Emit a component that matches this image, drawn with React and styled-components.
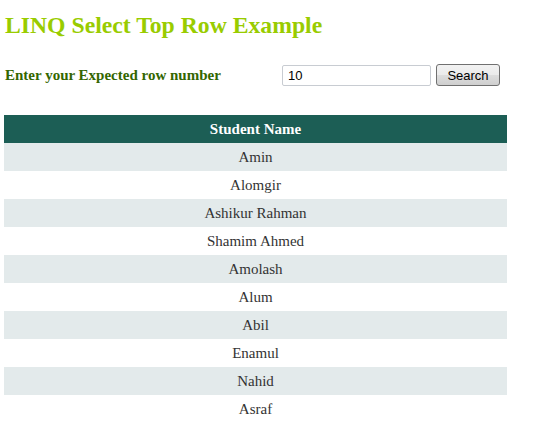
import React from 'react';
import styled, { createGlobalStyle } from 'styled-components';

const GlobalStyle = createGlobalStyle`
  body {
    margin: 0;
    background: #fff;
    font-family: "Liberation Serif", "Times New Roman", serif;
  }
`;

const Page = styled.div`
  padding: 9px 0 0 4px;
`;

const Title = styled.h2`
  margin: 0 0 0 1px;
  font-size: 23.7px;
  line-height: 32px;
  font-weight: bold;
  color: #99cc00;
`;

const SearchRow = styled.div`
  display: flex;
  align-items: center;
  margin-top: 23px;
  height: 22px;
`;

const Label = styled.label`
  width: 277px;
  padding-left: 1px;
  font-size: 15px;
  font-weight: bold;
  color: #336600;
`;

const Input = styled.input`
  box-sizing: border-box;
  width: 149px;
  height: 21px;
  margin: 0;
  padding: 1px 5px;
  border: 1px solid #c8ccd2;
  border-radius: 2px;
  font-family: "Liberation Sans", Arial, sans-serif;
  font-size: 13px;
  color: #000;
`;

const Button = styled.button`
  box-sizing: border-box;
  width: 64px;
  height: 22px;
  margin-left: 5px;
  padding: 0;
  border: 1px solid #707070;
  border-radius: 3px;
  background: linear-gradient(#f2f2f2, #ebebeb 50%, #dddddd 51%, #cfcfcf);
  font-family: "Liberation Sans", Arial, sans-serif;
  font-size: 13px;
  color: #000;
`;

const Table = styled.table`
  margin-top: 29px;
  width: 503px;
  border-collapse: collapse;
  font-family: "Liberation Serif", "Times New Roman", serif;
  font-size: 15px;
  color: #333;
`;

const HeadCell = styled.th`
  height: 28px;
  padding: 0;
  background: #1c5e55;
  color: #fff;
  font-weight: bold;
  text-align: center;
`;

const Row = styled.tr`
  background: ${(p) => (p.$alt ? '#e3eaeb' : '#fff')};
`;

const Cell = styled.td`
  height: 28px;
  padding: 0;
  text-align: center;
`;

const students = [
  'Amin',
  'Alomgir',
  'Ashikur Rahman',
  'Shamim Ahmed',
  'Amolash',
  'Alum',
  'Abil',
  'Enamul',
  'Nahid',
  'Asraf',
];

export default function App() {
  return (
    <>
      <GlobalStyle />
      <Page>
        <Title>LINQ Select Top Row Example</Title>
        <SearchRow>
          <Label>Enter your Expected row number</Label>
          <Input defaultValue="10" />
          <Button>Search</Button>
        </SearchRow>
        <Table>
          <thead>
            <tr>
              <HeadCell>Student Name</HeadCell>
            </tr>
          </thead>
          <tbody>
            {students.map((name, i) => (
              <Row key={name} $alt={i % 2 === 0}>
                <Cell>{name}</Cell>
              </Row>
            ))}
          </tbody>
        </Table>
      </Page>
    </>
  );
}
